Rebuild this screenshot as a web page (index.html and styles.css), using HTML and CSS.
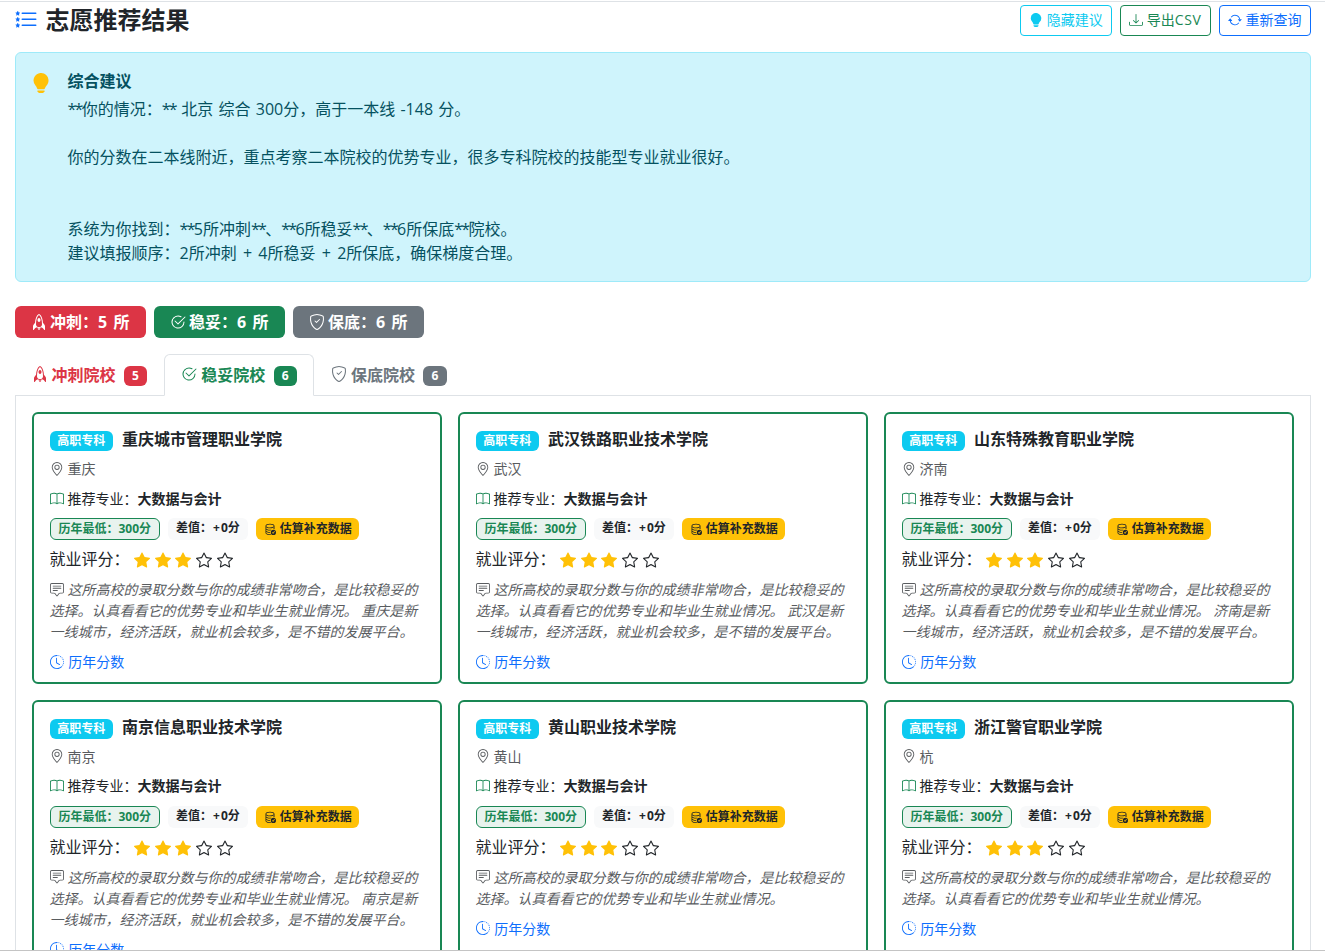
FILE: index.html
```html
<!DOCTYPE html>
<html lang="zh-CN">
<head>
    <meta charset="UTF-8">
    <title>志愿推荐结果</title>
    <link rel="stylesheet" href="styles.css">
</head>
<body>
    <svg class="sprite" xmlns="http://www.w3.org/2000/svg">
        <symbol id="list-stars" viewBox="0 0 16 16"><path d="M5 11.5a.5.5 0 0 1 .5-.5h9a.5.5 0 0 1 0 1h-9a.5.5 0 0 1-.5-.5m0-4a.5.5 0 0 1 .5-.5h9a.5.5 0 0 1 0 1h-9a.5.5 0 0 1-.5-.5m0-4a.5.5 0 0 1 .5-.5h9a.5.5 0 0 1 0 1h-9a.5.5 0 0 1-.5-.5"/><path id="mini-star" d="M2.242 2.194a.27.27 0 0 1 .516 0l.162.53c.035.115.14.194.258.194h.551c.259 0 .37.333.164.493l-.468.363a.28.28 0 0 0-.094.3l.173.569c.078.256-.213.462-.423.3l-.417-.324a.27.27 0 0 0-.328 0l-.417.323c-.21.163-.5-.043-.423-.299l.173-.57a.28.28 0 0 0-.094-.299l-.468-.363c-.206-.16-.095-.493.164-.493h.55a.27.27 0 0 0 .259-.194z"/><use href="#mini-star" y="4"/><use href="#mini-star" y="8"/></symbol>
        <symbol id="lightbulb-fill" viewBox="0 0 16 16"><path d="M2 6a6 6 0 1 1 10.174 4.31c-.203.196-.359.4-.453.619l-.762 1.769A.5.5 0 0 1 10.5 13h-5a.5.5 0 0 1-.46-.302l-.761-1.77a2 2 0 0 0-.453-.618A5.98 5.98 0 0 1 2 6m3 8.5a.5.5 0 0 1 .5-.5h5a.5.5 0 0 1 0 1l-.224.447a1 1 0 0 1-.894.553H6.618a1 1 0 0 1-.894-.553L5.5 15a.5.5 0 0 1-.5-.5"/></symbol>
        <symbol id="download" viewBox="0 0 16 16"><path d="M.5 9.9a.5.5 0 0 1 .5.5v2.5a1 1 0 0 0 1 1h12a1 1 0 0 0 1-1v-2.5a.5.5 0 0 1 1 0v2.5a2 2 0 0 1-2 2H2a2 2 0 0 1-2-2v-2.5a.5.5 0 0 1 .5-.5"/><path d="M7.646 11.854a.5.5 0 0 0 .708 0l3-3a.5.5 0 0 0-.708-.708L8.5 10.293V1.5a.5.5 0 0 0-1 0v8.793L5.354 8.146a.5.5 0 1 0-.708.708z"/></symbol>
        <symbol id="arrow-repeat" viewBox="0 0 16 16"><path d="M11.534 7h3.932a.25.25 0 0 1 .192.41l-1.966 2.36a.25.25 0 0 1-.384 0l-1.966-2.36a.25.25 0 0 1 .192-.41m-11 2h3.932a.25.25 0 0 0 .192-.41L2.692 6.23a.25.25 0 0 0-.384 0L.342 8.59A.25.25 0 0 0 .534 9"/><path d="M8 3c-1.552 0-2.94.707-3.857 1.818a.5.5 0 1 1-.771-.636A6.002 6.002 0 0 1 13.917 7H12.9A5 5 0 0 0 8 3M3.1 9a5.002 5.002 0 0 0 8.757 2.182.5.5 0 1 1 .771.636A6.002 6.002 0 0 1 2.083 9z"/></symbol>
        <symbol id="rocket" viewBox="0 0 16 16"><path d="M8 8c.828 0 1.5-.895 1.5-2S8.828 4 8 4s-1.5.895-1.5 2S7.172 8 8 8"/><path d="M11.953 8.81c-.195-3.388-.968-5.507-1.777-6.819C9.707 1.233 9.23.751 8.857.454a3.5 3.5 0 0 0-.463-.315A2 2 0 0 0 8.25.064.55.55 0 0 0 8 0a.55.55 0 0 0-.266.073 2 2 0 0 0-.142.08 4 4 0 0 0-.459.33c-.37.308-.844.803-1.31 1.57-.805 1.322-1.577 3.433-1.774 6.756l-1.497 1.826-.004.005A2.5 2.5 0 0 0 2 12.202V15.5a.5.5 0 0 0 .9.3l1.125-1.5c.166-.222.42-.4.752-.57.214-.108.414-.192.625-.281l.198-.084c.7.428 1.55.635 2.4.635s1.7-.207 2.4-.635q.1.044.196.083c.213.09.413.174.627.282.332.17.586.348.752.57l1.125 1.5a.5.5 0 0 0 .9-.3v-3.298a2.5 2.5 0 0 0-.548-1.562zM12 10.445v.055c0 .866-.284 1.585-.75 2.14.146.064.292.13.425.199.39.197.8.46 1.1.86L13 14v-1.798a1.5 1.5 0 0 0-.327-.935zM4.75 12.64C4.284 12.085 4 11.366 4 10.5v-.054l-.673.82a1.5 1.5 0 0 0-.327.936V14l.225-.3c.3-.4.71-.664 1.1-.861.133-.068.279-.135.425-.199M8.009 1.073q.096.06.226.163c.284.226.683.621 1.09 1.28C10.137 3.836 11 6.237 11 10.5c0 .858-.374 1.48-.943 1.893C9.517 12.786 8.781 13 8 13s-1.517-.214-2.057-.607C5.373 11.979 5 11.358 5 10.5c0-4.182.86-6.586 1.677-7.928.409-.67.81-1.082 1.096-1.32q.136-.113.236-.18Z"/><path d="M9.479 14.361c-.48.093-.98.139-1.479.139s-.999-.046-1.479-.139L7.6 15.8a.5.5 0 0 0 .8 0z"/></symbol>
        <symbol id="check2-circle" viewBox="0 0 16 16"><path d="M2.5 8a5.5 5.5 0 0 1 8.25-4.764.5.5 0 0 0 .5-.866A6.5 6.5 0 1 0 14.5 8a.5.5 0 0 0-1 0 5.5 5.5 0 1 1-11 0"/><path d="M15.354 3.354a.5.5 0 0 0-.708-.708L8 9.293 5.354 6.646a.5.5 0 1 0-.708.708l3 3a.5.5 0 0 0 .708 0z"/></symbol>
        <symbol id="shield-check" viewBox="0 0 16 16"><path d="M5.338 1.59a61 61 0 0 0-2.837.856.48.48 0 0 0-.328.39c-.554 4.157.726 7.19 2.253 9.188a10.7 10.7 0 0 0 2.287 2.233c.346.244.652.42.893.533q.18.085.293.118a1 1 0 0 0 .101.025 1 1 0 0 0 .1-.025q.114-.034.294-.118c.24-.113.547-.29.893-.533a10.7 10.7 0 0 0 2.287-2.233c1.527-1.997 2.807-5.031 2.253-9.188a.48.48 0 0 0-.328-.39c-.651-.213-1.75-.56-2.837-.855C9.552 1.29 8.531 1.067 8 1.067c-.53 0-1.552.223-2.662.524zM5.072.56C6.157.265 7.31 0 8 0s1.843.265 2.928.56c1.11.3 2.229.655 2.887.87a1.54 1.54 0 0 1 1.044 1.262c.596 4.477-.787 7.795-2.465 9.99a11.8 11.8 0 0 1-2.517 2.453 7 7 0 0 1-1.048.625c-.28.132-.581.24-.829.24s-.548-.108-.829-.24a7 7 0 0 1-1.048-.625 11.8 11.8 0 0 1-2.517-2.453C1.928 10.487.545 7.169 1.141 2.692A1.54 1.54 0 0 1 2.185 1.43 63 63 0 0 1 5.072.56"/><path d="M10.854 5.146a.5.5 0 0 1 0 .708l-3 3a.5.5 0 0 1-.708 0l-1.5-1.5a.5.5 0 1 1 .708-.708L7.5 7.793l2.646-2.647a.5.5 0 0 1 .708 0"/></symbol>
        <symbol id="geo-alt" viewBox="0 0 16 16"><path d="M12.166 8.94c-.524 1.062-1.234 2.12-1.96 3.07A32 32 0 0 1 8 14.58a32 32 0 0 1-2.206-2.57c-.726-.95-1.436-2.008-1.96-3.07C3.304 7.867 3 6.862 3 6a5 5 0 0 1 10 0c0 .862-.305 1.867-.834 2.94M8 16s6-5.686 6-10A6 6 0 0 0 2 6c0 4.314 6 10 6 10"/><path d="M8 8a2 2 0 1 1 0-4 2 2 0 0 1 0 4m0 1a3 3 0 1 0 0-6 3 3 0 0 0 0 6"/></symbol>
        <symbol id="book" viewBox="0 0 16 16"><path d="M1 2.828c.885-.37 2.154-.769 3.388-.893 1.33-.134 2.458.063 3.112.752v9.746c-.935-.53-2.12-.603-3.213-.493-1.18.12-2.37.461-3.287.811zm7.5-.141c.654-.689 1.782-.886 3.112-.752 1.234.124 2.503.523 3.388.893v9.923c-.918-.35-2.107-.692-3.287-.81-1.094-.111-2.278-.039-3.213.492zM8 1.783C7.015.936 5.587.81 4.287.94c-1.514.153-3.042.672-3.994 1.105A.5.5 0 0 0 0 2.5v11a.5.5 0 0 0 .707.455c.882-.4 2.303-.881 3.68-1.02 1.409-.142 2.59.087 3.223.877a.5.5 0 0 0 .78 0c.633-.79 1.814-1.019 3.222-.877 1.378.139 2.8.62 3.681 1.02A.5.5 0 0 0 16 13.5v-11a.5.5 0 0 0-.293-.455c-.952-.433-2.48-.952-3.994-1.105C10.413.809 8.985.936 8 1.783"/></symbol>
        <symbol id="database-check" viewBox="0 0 16 16"><path d="M12.5 16a3.5 3.5 0 1 0 0-7 3.5 3.5 0 0 0 0 7m1.679-4.493-1.335 2.226a.75.75 0 0 1-1.174.144l-.774-.773a.5.5 0 0 1 .708-.708l.547.548 1.17-1.951a.5.5 0 1 1 .858.514"/><path d="M12.096 6.223A5 5 0 0 0 13 5.698V7c0 .289-.213.654-.753 1.007a4.5 4.5 0 0 1 1.753.25V4c0-1.007-.875-1.755-1.904-2.223C11.022 1.289 9.573 1 8 1s-3.022.289-4.096.777C2.875 2.245 2 2.993 2 4v9c0 1.007.875 1.755 1.904 2.223C4.978 15.71 6.427 16 8 16c.536 0 1.058-.034 1.555-.097a4.5 4.5 0 0 1-.813-.927Q8.378 15 8 15c-1.464 0-2.766-.27-3.682-.687C3.356 13.875 3 13.373 3 13v-1.302c.271.202.58.378.904.525C4.978 12.71 6.427 13 8 13h.027a4.6 4.6 0 0 1 0-1H8c-1.464 0-2.766-.27-3.682-.687C3.356 10.875 3 10.373 3 10V8.698c.271.202.58.378.904.525C4.978 9.71 6.427 10 8 10q.393 0 .774-.024a4.5 4.5 0 0 1 1.102-1.132C9.298 8.944 8.666 9 8 9c-1.464 0-2.766-.27-3.682-.687C3.356 7.875 3 7.373 3 7V5.698c.271.202.58.378.904.525C4.978 6.711 6.427 7 8 7s3.022-.289 4.096-.777M3 4c0-.374.356-.875 1.318-1.313C5.234 2.271 6.536 2 8 2s2.766.27 3.682.687C12.644 3.125 13 3.627 13 4c0 .374-.356.875-1.318 1.313C10.766 5.729 9.464 6 8 6s-2.766-.27-3.682-.687C3.356 4.875 3 4.373 3 4"/></symbol>
        <symbol id="star-fill" viewBox="0 0 16 16"><path d="M3.612 15.443c-.386.198-.824-.149-.746-.592l.83-4.73L.173 6.765c-.329-.314-.158-.888.283-.95l4.898-.696L7.538.792c.197-.39.73-.39.927 0l2.184 4.327 4.898.696c.441.062.612.636.282.95l-3.522 3.356.83 4.73c.078.443-.36.79-.746.592L8 13.187l-4.389 2.256z"/></symbol>
        <symbol id="star" viewBox="0 0 16 16"><path d="M2.866 14.85c-.078.444.36.791.746.593l4.39-2.256 4.389 2.256c.386.198.824-.149.746-.592l-.83-4.73 3.522-3.356c.33-.314.16-.888-.282-.95l-4.898-.696L8.465.792a.513.513 0 0 0-.927 0L5.354 5.12l-4.898.696c-.441.062-.612.636-.283.95l3.523 3.356-.83 4.73zm4.905-2.767-3.686 1.894.694-3.957a.56.56 0 0 0-.163-.505L1.71 6.745l4.052-.576a.53.53 0 0 0 .393-.288L8 2.223l1.847 3.658a.53.53 0 0 0 .393.288l4.052.575-2.906 2.77a.56.56 0 0 0-.163.506l.694 3.957-3.686-1.894a.5.5 0 0 0-.461 0z"/></symbol>
        <symbol id="chat-square-text" viewBox="0 0 16 16"><path d="M14 1a1 1 0 0 1 1 1v8a1 1 0 0 1-1 1h-2.5a2 2 0 0 0-1.6.8L8 14.333 6.1 11.8a2 2 0 0 0-1.6-.8H2a1 1 0 0 1-1-1V2a1 1 0 0 1 1-1zM2 0a2 2 0 0 0-2 2v8a2 2 0 0 0 2 2h2.5a1 1 0 0 1 .8.4l1.9 2.533a1 1 0 0 0 1.6 0l1.9-2.533a1 1 0 0 1 .8-.4H14a2 2 0 0 0 2-2V2a2 2 0 0 0-2-2z"/><path d="M3 3.5a.5.5 0 0 1 .5-.5h9a.5.5 0 0 1 0 1h-9a.5.5 0 0 1-.5-.5M3 6a.5.5 0 0 1 .5-.5h9a.5.5 0 0 1 0 1h-9A.5.5 0 0 1 3 6m0 2.5a.5.5 0 0 1 .5-.5h5a.5.5 0 0 1 0 1h-5a.5.5 0 0 1-.5-.5"/></symbol>
        <symbol id="clock-history" viewBox="0 0 16 16"><path d="M8.515 1.019A7 7 0 0 0 8 1V0a8 8 0 0 1 .589.022zm2.004.45a7 7 0 0 0-.985-.299l.219-.976q.576.129 1.126.342zm1.37.71a7 7 0 0 0-.439-.27l.493-.87a8 8 0 0 1 .979.654l-.615.789a7 7 0 0 0-.418-.302zm1.834 1.79a7 7 0 0 0-.653-.796l.724-.69q.406.429.747.91zm.744 1.352a7 7 0 0 0-.214-.468l.893-.45a8 8 0 0 1 .45 1.088l-.95.313a7 7 0 0 0-.179-.483m.53 2.507a7 7 0 0 0-.1-1.025l.985-.17q.1.58.116 1.17zm-.131 1.538q.05-.254.081-.51l.993.123a8 8 0 0 1-.23 1.155l-.964-.267q.069-.247.12-.501m-.952 2.379q.276-.436.486-.908l.914.405q-.24.54-.555 1.038zm-.964 1.205q.183-.183.35-.378l.758.653a8 8 0 0 1-.401.432z"/><path d="M8 1a7 7 0 1 0 4.95 11.95l.707.707A8.001 8.001 0 1 1 8 0z"/><path d="M7.5 3a.5.5 0 0 1 .5.5v5.21l3.248 1.856a.5.5 0 0 1-.496.868l-3.5-2A.5.5 0 0 1 7 9V3.5a.5.5 0 0 1 .5-.5"/></symbol>
    </svg>

    <div class="page">
        <div class="container">
            <div class="result-header">
                <h4><svg class="icon text-primary"><use href="#list-stars"/></svg>志愿推荐结果</h4>
                <div class="actions">
                    <button class="btn btn-info"><svg class="icon"><use href="#lightbulb-fill"/></svg>隐藏建议</button>
                    <button class="btn btn-success"><svg class="icon"><use href="#download"/></svg><span>导出<span class="latin">CSV</span></span></button>
                    <button class="btn btn-primary"><svg class="icon"><use href="#arrow-repeat"/></svg>重新查询</button>
                </div>
            </div>

            <div class="alert">
                <svg class="icon"><use href="#lightbulb-fill"/></svg>
                <div>
                    <h6>综合建议</h6>
                    <div class="advice" id="advice"></div>
                </div>
            </div>

            <div class="summary">
                <span class="bg-danger"><svg class="icon"><use href="#rocket"/></svg>冲刺：5 所</span>
                <span class="bg-success"><svg class="icon"><use href="#check2-circle"/></svg>稳妥：6 所</span>
                <span class="bg-secondary"><svg class="icon"><use href="#shield-check"/></svg>保底：6 所</span>
            </div>

            <div class="tabs">
                <button class="tab text-danger"><svg class="icon"><use href="#rocket"/></svg>冲刺院校<span class="badge bg-danger">5</span></button>
                <button class="tab text-success active"><svg class="icon"><use href="#check2-circle"/></svg>稳妥院校<span class="badge bg-success">6</span></button>
                <button class="tab text-secondary"><svg class="icon"><use href="#shield-check"/></svg>保底院校<span class="badge bg-secondary">6</span></button>
            </div>
            <div class="tab-content" id="schools"></div>
        </div>
    </div>

    <script>
        const advice = [
            '**你的情况：** 北京 综合 300分，高于一本线 -148 分。',
            '',
            '你的分数在二本线附近，重点考察二本院校的优势专业，很多专科院校的技能型专业就业很好。',
            '',
            '',
            '系统为你找到：**5所冲刺**、**6所稳妥**、**6所保底**院校。',
            '建议填报顺序：2所冲刺 + 4所稳妥 + 2所保底，确保梯度合理。'
        ];
        const comment = '这所高校的录取分数与你的成绩非常吻合，是比较稳妥的选择。认真看看它的优势专业和毕业生就业情况。';
        const cityNote = '是新一线城市，经济活跃，就业机会较多，是不错的发展平台。';

        const schools = [
            { name: '重庆城市管理职业学院', city: '重庆', newTier: true },
            { name: '武汉铁路职业技术学院', city: '武汉', newTier: true },
            { name: '山东特殊教育职业学院', city: '济南', newTier: true },
            { name: '南京信息职业技术学院', city: '南京', newTier: true },
            { name: '黄山职业技术学院', city: '黄山' },
            { name: '浙江警官职业学院', city: '杭' }
        ];

        function icon(name, cls = '') {
            return `<svg class="icon ${cls}"><use href="#${name}"/></svg>`;
        }

        function stars(score) {
            let html = '';
            for (let i = 1; i <= 5; i++) {
                html += i <= score ? icon('star-fill', 'text-warning') : icon('star');
            }
            return html;
        }

        document.getElementById('advice').innerHTML = advice.join('\n')
            .replace(/\*\*/g, '<span class="mark">**</span>')
            .replace(/\+/g, '<span class="plus">+</span>');

        document.getElementById('schools').innerHTML = schools.map(s => `
            <div class="school-card">
                <div class="school-title"><span class="badge bg-info">高职专科</span><h6>${s.name}</h6></div>
                <div class="city">${icon('geo-alt')}${s.city}</div>
                <div class="major">${icon('book', 'text-success')}推荐专业：<strong>大数据与会计</strong></div>
                <div class="scores">
                    <span class="badge lowest">历年最低：300分</span>
                    <span class="badge diff"><span>差值：<span class="plus">+</span>0分</span></span>
                    <span class="badge estimate">${icon('database-check')}估算补充数据</span>
                </div>
                <div class="rating">就业评分：<span class="stars">${stars(3)}</span></div>
                <div class="comment">${icon('chat-square-text')}${comment}${s.newTier ? ' ' + s.city + cityNote : ''}</div>
                <a class="history">${icon('clock-history')}历年分数</a>
            </div>
        `).join('');
    </script>
</body>
</html>
```

FILE: styles.css
```css
* {
    box-sizing: border-box;
}
body {
    margin: 0;
    height: 952px;
    overflow: hidden;
    background: #fff;
    color: #212529;
    font-family: "Open Sans", "Noto Sans CJK SC", sans-serif;
    font-size: 16px;
    line-height: 24px;
}
h4, h6 {
    margin: 0;
}
button {
    font-family: inherit;
    cursor: pointer;
}
.sprite {
    display: none;
}
.icon {
    width: 1em;
    height: 1em;
    flex-shrink: 0;
    fill: currentColor;
    vertical-align: -0.125em;
}
.page {
    height: 950px;
    margin-top: 1px;
    border-top: 1px solid #dee2e6;
    border-bottom: 1px solid #c4c4c4;
    overflow: hidden;
}
.container {
    width: 1320px;
    margin: 0 auto;
    padding: 3px 12px 0;
}

/* colours */
.text-primary { color: #0d6efd; }
.text-success { color: #198754; }
.text-danger { color: #dc3545; }
.text-secondary { color: #6c757d; }
.text-warning { color: #ffc107; }
.bg-danger { background: #dc3545; }
.bg-success { background: #198754; }
.bg-secondary { background: #6c757d; }
.bg-info { background: #0dcaf0; }

/* header */
.result-header {
    display: flex;
    justify-content: space-between;
    align-items: center;
    height: 31px;
    margin-bottom: 16px;
}
.result-header h4 {
    display: flex;
    align-items: center;
    gap: 8px;
    margin: -2px 0 0 -1px;
    font-size: 24px;
    font-weight: 700;
}
.actions {
    display: flex;
    gap: 8px;
}
.btn {
    display: flex;
    align-items: center;
    gap: 4px;
    padding: 3px 8px 5px;
    border: 1px solid currentColor;
    border-radius: 4px;
    background: transparent;
    font-size: 14px;
    line-height: 21px;
}
.btn .latin {
    letter-spacing: 0.6px;
}
.btn-info { color: #0dcaf0; }
.btn-success { color: #198754; }
.btn-primary { color: #0d6efd; }

/* advice */
.alert {
    display: flex;
    gap: 16px;
    padding: 16px;
    margin-bottom: 24px;
    border: 1px solid #9eeaf9;
    border-radius: 6px;
    background: #cff4fc;
    color: #055160;
}
.alert .icon {
    margin: 4px 1px 0 -1px;
    font-size: 20px;
    color: #ffc107;
}
.alert h6 {
    margin-bottom: 4px;
    font-size: 16px;
    font-weight: 700;
}
.advice {
    white-space: pre-line;
    word-spacing: 1.1px;
}
.advice .mark {
    letter-spacing: -1.7px;
}
.plus {
    margin: 0 1px;
}

/* summary */
.summary {
    display: flex;
    gap: 8px;
    margin-bottom: 16px;
}
.summary span {
    display: flex;
    align-items: center;
    gap: 3.4px;
    height: 32px;
    padding: 0 16px;
    border-radius: 6px;
    color: #fff;
    font-weight: 700;
    word-spacing: 2.3px;
}

/* tabs */
.tabs {
    display: flex;
    border-bottom: 1px solid #dee2e6;
}
.tab {
    display: flex;
    align-items: center;
    gap: 4px;
    height: 42px;
    margin-bottom: -1px;
    padding: 7px 16px 9px;
    border: 1px solid transparent;
    border-radius: 6px 6px 0 0;
    background: transparent;
    font-size: 16px;
    font-weight: 700;
}
.tab.active {
    border-color: #dee2e6 #dee2e6 #fff;
    background: #fff;
}
.tab .badge {
    justify-content: center;
    width: 23.3px;
    margin: 4px 0 0 4.4px;
}
.tab-content {
    display: grid;
    grid-template-columns: repeat(3, 1fr);
    gap: 16px;
    padding: 16px;
    border: 1px solid #dee2e6;
    border-top: 0;
}
.badge {
    display: inline-flex;
    align-items: center;
    gap: 4px;
    height: 20.4px;
    padding: 0 7.8px;
    border-radius: 6px;
    color: #fff;
    font-size: 12px;
    font-weight: 700;
    line-height: 12px;
}

/* school cards */
.school-card {
    height: 271.6px;
    padding: 16px 16px 0;
    border: 2px solid #198754;
    border-radius: 6px;
    font-size: 14px;
    line-height: 21px;
}
.school-title {
    display: flex;
    align-items: flex-start;
    gap: 8.8px;
    height: 20px;
}
.school-title .badge {
    margin-top: 1px;
}
.school-title h6 {
    margin-top: -1px;
    font-size: 16px;
    font-weight: 700;
    line-height: 20px;
}
.city {
    margin-top: 8px;
    color: #595c5f;
}
.major {
    margin-top: 8.8px;
}
.city .icon, .major .icon, .comment .icon, .history .icon {
    margin-right: 4px;
}
.scores {
    display: flex;
    gap: 8px;
    margin-top: 9.2px;
}
.scores .badge {
    height: 22px;
}
.badge.lowest {
    padding: 0 8px;
    border: 1px solid #198754;
    background: #e8f3ee;
    color: #198754;
}
.badge.diff {
    padding: 0 8px 2px;
    background: #f8f9fa;
    color: #212529;
}
.badge.estimate {
    background: #ffc107;
    color: #212529;
}
.rating {
    display: flex;
    align-items: center;
    height: 24px;
    margin-top: 8px;
    font-size: 16px;
}
.stars {
    display: flex;
    gap: 4.8px;
    margin-left: 4.3px;
}
.comment {
    margin-top: 7px;
    color: #595c5f;
    font-style: italic;
}
.history {
    display: block;
    margin: 9px 0 0 0.8px;
    color: #0d6efd;
}
```
